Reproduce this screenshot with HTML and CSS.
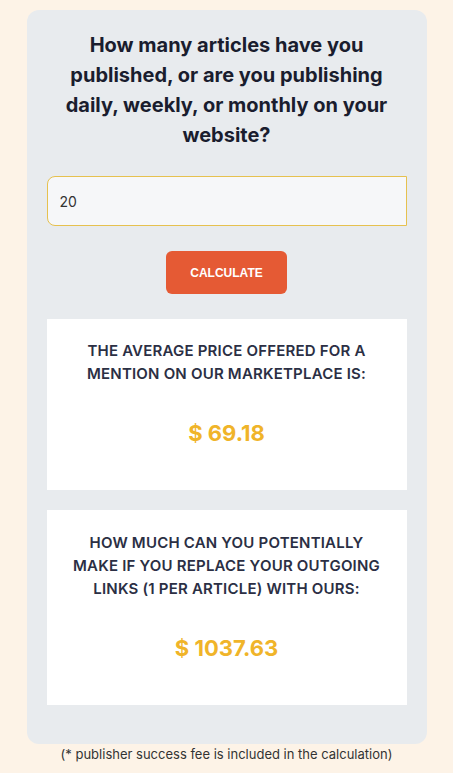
FILE: index.html
```html
<!DOCTYPE html>
<html lang="en">
<head>
  <meta charset="UTF-8">
  <meta name="viewport" content="width=device-width, initial-scale=1.0">
  <title>Earnings Calculator</title>
  <link rel="stylesheet" href="styles.css">
</head>
<body>
  <div class="calc-container">
    <div class="calc-question">How many articles have you published, or are you publishing daily, weekly, or monthly on your website?</div>
    <input type="text" class="calc-input" id="articles" value="20">
    <div class="btn-row">
      <button type="button" class="calc-btn" id="calcBtn">CALCULATE</button>
    </div>
    <div class="result-box">
      <div class="result-label">The average price offered for a mention on our marketplace is:</div>
      <div class="result-value" id="avgPrice">$ 69.18</div>
    </div>
    <div class="result-box">
      <div class="result-label">How much can you potentially make if you replace your outgoing links (1 per article) with ours:</div>
      <div class="result-value" id="total">$ 1037.63</div>
    </div>
  </div>
  <div class="footnote">(* publisher success fee is included in the calculation)</div>
  <script>
    document.getElementById("calcBtn").addEventListener("click", function() {
      const count = parseFloat(document.getElementById("articles").value) || 0;
      const total = count * 69.18 * 0.75; // publisher fee taken off
      document.getElementById("total").textContent = "$ " + total.toFixed(2);
    });
  </script>
</body>
</html>
```

FILE: styles.css
```css
body {
  font-family: Inter, "Liberation Sans", sans-serif;
  background-color: #fdf3e7;
  margin: 0;
  padding: 10px 0 0;
}
.calc-container {
  width: 400px;
  box-sizing: border-box;
  margin: 0 auto;
  background-color: #e8ebee;
  border-radius: 12px;
  padding: 20px 20px 39px;
}
.calc-question {
  text-align: center;
  font-size: 20px;
  font-weight: 700;
  line-height: 30px;
  color: #1a1d2e;
  padding: 0 14px;
}
.calc-input {
  display: block;
  width: 100%;
  box-sizing: border-box;
  height: 50px;
  margin-top: 26px;
  padding: 0 12px;
  font-family: Inter, sans-serif;
  font-size: 14px;
  color: #333;
  background-color: #f6f7f9;
  border: 1px solid #e6c14f;
  border-radius: 8px 0 0 8px;
  outline: none;
}
.btn-row {
  display: flex;
  justify-content: center;
  margin-top: 25px;
}
.calc-btn {
  width: 121px;
  height: 43px;
  background-color: #e55a34;
  color: #fff;
  border: none;
  border-radius: 6px;
  font-family: "Liberation Sans", Arial, sans-serif;
  font-size: 12px;
  font-weight: 700;
  cursor: pointer;
}
.result-box {
  background-color: #fff;
  margin-top: 25px;
  padding: 20px 20px 42px;
  text-align: center;
}
.result-box + .result-box {
  margin-top: 20px;
  padding-top: 21px;
}
.result-label {
  text-transform: uppercase;
  font-size: 15px;
  font-weight: 600;
  line-height: 23px;
  letter-spacing: 0.2px;
  color: #2b2f44;
}
.result-value {
  margin-top: 33px;
  font-size: 22px;
  font-weight: 700;
  line-height: 30px;
  color: #f0b429;
}
.footnote {
  text-align: center;
  font-size: 13px;
  color: #333;
  margin-top: 2px;
}
```
